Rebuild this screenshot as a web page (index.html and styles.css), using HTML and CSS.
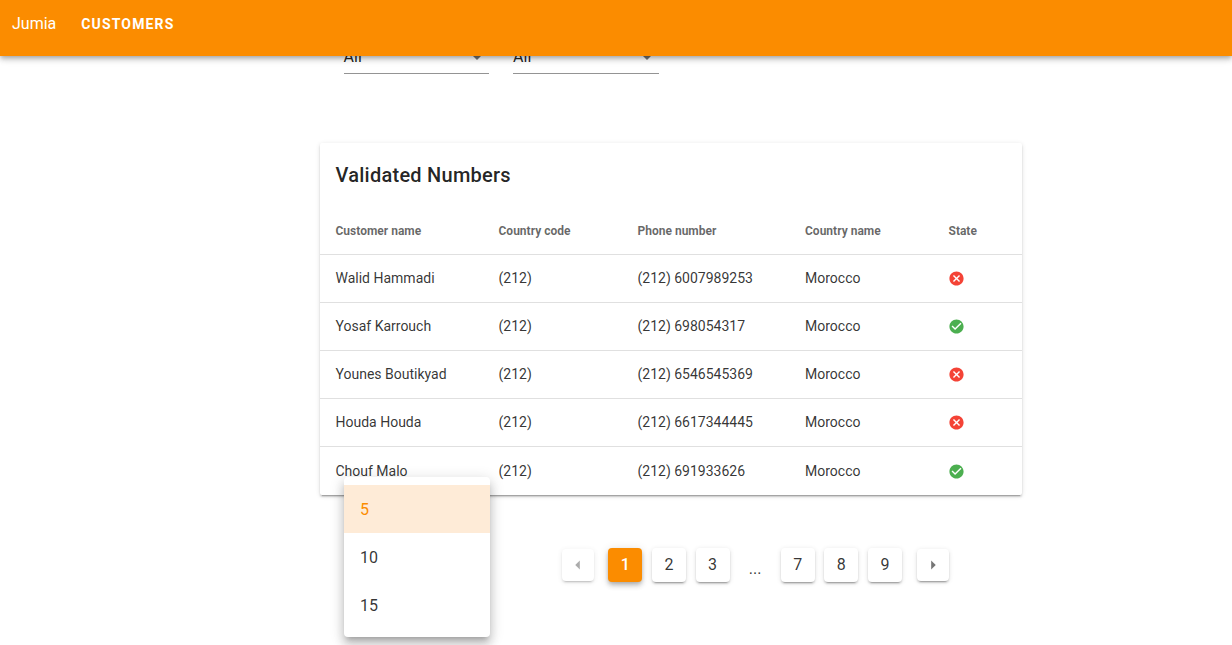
FILE: index.html
```html
<!DOCTYPE html>
<html lang="en">
<head>
<meta charset="utf-8">
<title>Customers</title>
<link rel="stylesheet" href="styles.css">
</head>
<body>
<svg class="sprite" aria-hidden="true">
  <symbol id="ok" viewBox="0 0 24 24"><path d="M12 2C6.5 2 2 6.5 2 12S6.5 22 12 22 22 17.5 22 12 17.5 2 12 2M10 17L5 12L6.41 10.59L10 14.17L17.59 6.58L19 8L10 17Z"/></symbol>
  <symbol id="bad" viewBox="0 0 24 24"><path d="M12,2C17.53,2 22,6.47 22,12C22,17.53 17.53,22 12,22C6.47,22 2,17.53 2,12C2,6.47 6.47,2 12,2M15.59,7L12,10.59L8.41,7L7,8.41L10.59,12L7,15.59L8.41,17L12,13.41L15.59,17L17,15.59L13.41,12L17,8.41L15.59,7Z"/></symbol>
  <symbol id="down" viewBox="0 0 24 24"><path d="M7,10L12,15L17,10H7Z"/></symbol>
  <symbol id="left" viewBox="0 0 24 24"><path d="M14,7L9,12L14,17V7Z"/></symbol>
  <symbol id="right" viewBox="0 0 24 24"><path d="M10,17L15,12L10,7V17Z"/></symbol>
</svg>
<header class="bar"><span class="brand">Jumia</span><a class="link">Customers</a></header>
<main class="content">
  <div class="filters">
    <div class="select"><span>All</span><svg class="caret"><use href="#down"/></svg></div>
    <div class="select"><span>All</span><svg class="caret"><use href="#down"/></svg></div>
  </div>
  <section class="card">
    <h1 class="title">Validated Numbers</h1>
    <div class="row head"><span>Customer name</span><span>Country code</span><span>Phone number</span><span>Country name</span><span>State</span></div>
    <div class="row"><span>Walid Hammadi</span><span>(212)</span><span>(212) 6007989253</span><span>Morocco</span><svg class="state bad"><use href="#bad"/></svg></div>
    <div class="row"><span>Yosaf Karrouch</span><span>(212)</span><span>(212) 698054317</span><span>Morocco</span><svg class="state ok"><use href="#ok"/></svg></div>
    <div class="row"><span>Younes Boutikyad</span><span>(212)</span><span>(212) 6546545369</span><span>Morocco</span><svg class="state bad"><use href="#bad"/></svg></div>
    <div class="row"><span>Houda Houda</span><span>(212)</span><span>(212) 6617344445</span><span>Morocco</span><svg class="state bad"><use href="#bad"/></svg></div>
    <div class="row last"><span>Chouf Malo</span><span>(212)</span><span>(212) 691933626</span><span>Morocco</span><svg class="state ok"><use href="#ok"/></svg></div>
  </section>
  <nav class="pages">
    <button class="nav prev"><svg class="arrow"><use href="#left"/></svg></button>
    <button class="page active">1</button>
    <button class="page">2</button>
    <button class="page">3</button>
    <span class="more">...</span>
    <button class="page">7</button>
    <button class="page">8</button>
    <button class="page">9</button>
    <button class="nav next"><svg class="arrow"><use href="#right"/></svg></button>
  </nav>
  <div class="menu">
    <div class="option chosen">5</div>
    <div class="option">10</div>
    <div class="option">15</div>
  </div>
</main>
</body>
</html>
```
FILE: styles.css
```css
* { box-sizing: border-box; }
html, body { height: 100%; }
body {
  margin: 0;
  overflow: hidden;
  background: #fff;
  color: rgba(0, 0, 0, .87);
  font-family: Roboto, "Liberation Sans", sans-serif;
}
.sprite { display: none; }
svg { fill: currentColor; }

.bar {
  position: relative;
  z-index: 2;
  display: flex;
  height: 56px;
  padding-left: 12px;
  gap: 25px;
  background: #fb8c00;
  color: #fff;
  line-height: 48px;
  box-shadow: 0 2px 4px -1px rgba(0, 0, 0, .2), 0 4px 5px rgba(0, 0, 0, .14), 0 1px 10px rgba(0, 0, 0, .12);
}
.brand { font-size: 16px; }
.link {
  font-size: 14px;
  font-weight: 700;
  letter-spacing: 1.15px;
  text-transform: uppercase;
}

.content {
  position: relative;
  width: 702px;
  margin-top: -15px;
  margin-left: 320px;
}
.filters {
  display: flex;
  gap: 24px;
  padding-left: 23.6px;
}
.select {
  display: flex;
  width: 145.5px;
  height: 33px;
  justify-content: space-between;
  border-bottom: 1px solid #949494;
  font-size: 16px;
  line-height: 32px;
}
.caret { width: 24px; height: 24px; margin-top: 4px; color: rgba(0, 0, 0, .54); }

.card {
  height: 352px;
  margin-top: 69px;
  border-radius: 2px;
  background: #fff;
  box-shadow: 0 3px 1px -2px rgba(0, 0, 0, .2), 0 2px 2px rgba(0, 0, 0, .14), 0 1px 5px rgba(0, 0, 0, .12);
}
.title {
  margin: 0;
  padding: 16px 15.5px;
  font-size: 20px;
  font-weight: 500;
  line-height: 32px;
  letter-spacing: .25px;
}
.row {
  display: grid;
  grid-template-columns: 163px 139px 167.5px 143.5px 1fr;
  align-items: center;
  height: 48px;
  padding-bottom: 1px;
  padding-left: 15.5px;
  border-bottom: 1px solid rgba(0, 0, 0, .12);
  color: rgba(0, 0, 0, .8);
  font-size: 14px;
}
.head {
  padding-bottom: 0;
  color: rgba(0, 0, 0, .6);
  font-size: 12px;
  font-weight: 700;
}
.last { padding-bottom: 0; border-bottom: 0; }
.state { width: 17px; height: 17px; margin: 1.6px 0 0 -1px; }
.ok { color: #4caf50; }
.bad { color: #f44336; }

.pages {
  display: flex;
  align-items: center;
  gap: 9.6px;
  height: 34px;
  margin: 53px 0 0 242px;
}
.page, .nav {
  display: flex;
  flex: none;
  align-items: center;
  justify-content: center;
  padding: 0;
  border: 0;
  border-radius: 4px;
  background: #fff;
  box-shadow: 0 3px 1px -2px rgba(0, 0, 0, .2), 0 2px 2px rgba(0, 0, 0, .14), 0 1px 5px rgba(0, 0, 0, .12);
  color: rgba(0, 0, 0, .8);
  font: 16px Roboto, "Liberation Sans", sans-serif;
}
.page { width: 34px; height: 34px; padding-bottom: 2px; }
.active {
  background: #fb8c00;
  color: #fff;
  font-weight: 500;
  box-shadow: 0 2px 4px -1px rgba(0, 0, 0, .2), 0 4px 5px rgba(0, 0, 0, .14), 0 1px 10px rgba(0, 0, 0, .12);
}
.nav { width: 32px; height: 32px; }
.prev { margin-right: 4.8px; opacity: .6; }
.next { margin-left: 5.3px; }
.arrow { width: 22px; height: 22px; color: rgba(0, 0, 0, .54); }
.more {
  align-self: flex-end;
  width: 32px;
  height: 32px;
  line-height: 38px;
  text-align: center;
  font-size: 16px;
  color: rgba(0, 0, 0, .8);
}

.menu {
  position: absolute;
  top: 436px;
  left: 24px;
  width: 146px;
  padding: 8px 0;
  border-radius: 4px;
  background: #fff;
  box-shadow: 0 5px 5px -3px rgba(0, 0, 0, .2), 0 8px 10px 1px rgba(0, 0, 0, .14), 0 3px 14px 2px rgba(0, 0, 0, .12);
}
.option {
  height: 48px;
  padding-left: 16px;
  color: rgba(0, 0, 0, .8);
  font-size: 16px;
  line-height: 50px;
}
.chosen { background: #feebd7; color: #fb8c00; }
```
